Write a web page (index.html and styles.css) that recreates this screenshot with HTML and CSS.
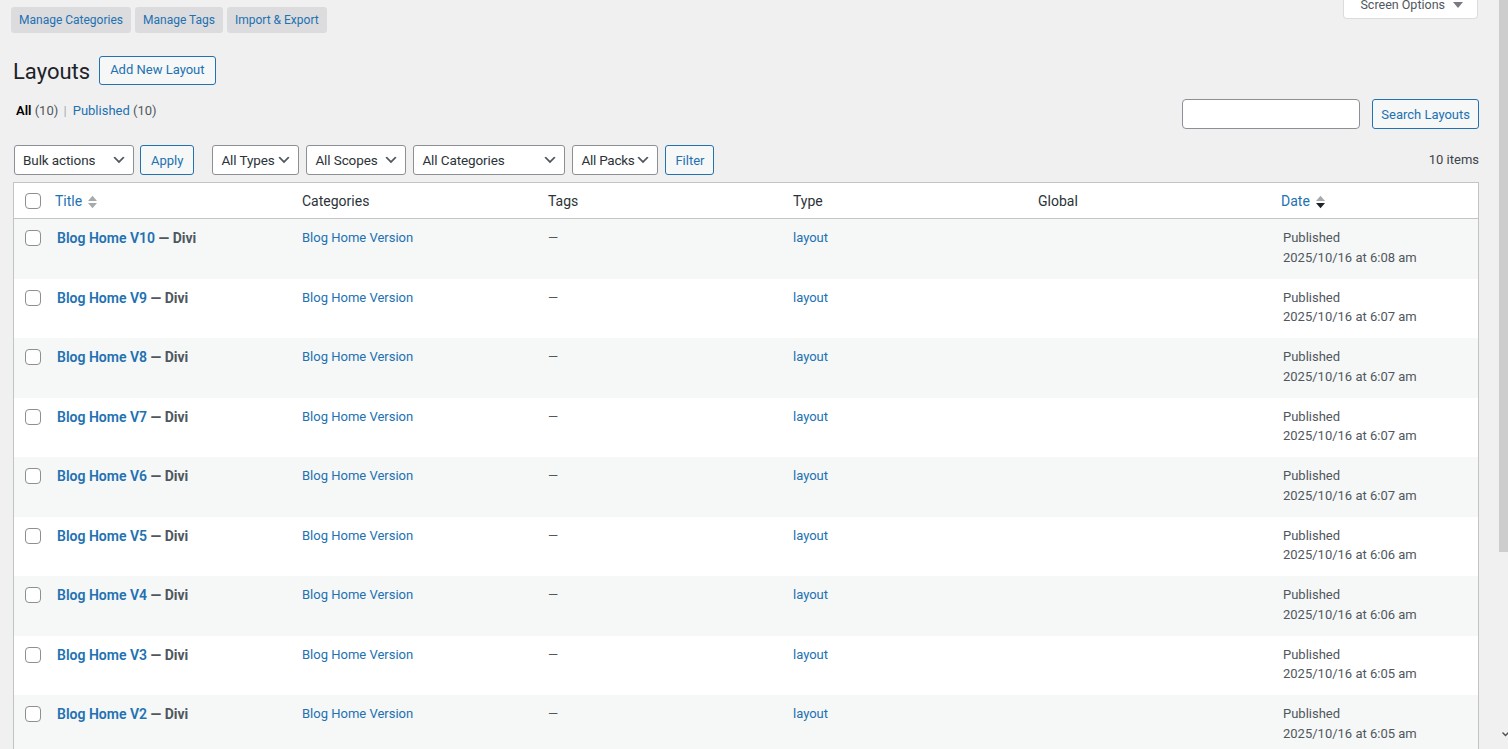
FILE: index.html
```html
<!DOCTYPE html>
<html lang="en">
<head>
    <meta charset="UTF-8">
    <meta name="viewport" content="width=device-width, initial-scale=1.0">
    <title>Layouts</title>
    <link rel="stylesheet" href="styles.css">
</head>
<body>
    <div class="screen">
        <div class="page">
            <div class="top-bar">
                <nav class="lib-tabs">
                    <a href="#" class="lib-tab">Manage Categories</a>
                    <a href="#" class="lib-tab">Manage Tags</a>
                    <a href="#" class="lib-tab">Import &amp; Export</a>
                </nav>
                <button class="screen-options">
                    <span>Screen Options</span>
                    <svg width="10" height="8" viewBox="0 0 10 8"><path d="M0 1h10L5 7z" fill="#787c82"/></svg>
                </button>
            </div>

            <div class="heading">
                <h1>Layouts</h1>
                <a href="#" class="button title-action">Add New Layout</a>
            </div>

            <div class="status-row">
                <ul class="subsubsub">
                    <li><a href="#" class="current">All <span class="count">(10)</span></a> <span class="sep">|</span></li>
                    <li><a href="#">Published <span class="count">(10)</span></a></li>
                </ul>
                <div class="search-box">
                    <input type="search" class="search-input">
                    <button class="button search-button">Search Layouts</button>
                </div>
            </div>

            <div class="tablenav">
                <div class="actions">
                    <div class="bulk">
                        <div class="select w-bulk"><span>Bulk actions</span> <svg class="chev" width="16" height="16" viewBox="0 0 20 20"><path d="M5 6l5 5 5-5 2 1-7 7-7-7z" fill="#50575e"/></svg></div>
                        <button class="button">Apply</button>
                    </div>
                    <div class="filters">
                        <div class="select w-types"><span>All Types</span> <svg class="chev" width="16" height="16" viewBox="0 0 20 20"><path d="M5 6l5 5 5-5 2 1-7 7-7-7z" fill="#50575e"/></svg></div>
                        <div class="select w-scopes"><span>All Scopes</span> <svg class="chev" width="16" height="16" viewBox="0 0 20 20"><path d="M5 6l5 5 5-5 2 1-7 7-7-7z" fill="#50575e"/></svg></div>
                        <div class="select w-cats"><span>All Categories</span> <svg class="chev" width="16" height="16" viewBox="0 0 20 20"><path d="M5 6l5 5 5-5 2 1-7 7-7-7z" fill="#50575e"/></svg></div>
                        <div class="select w-packs"><span>All Packs</span> <svg class="chev" width="16" height="16" viewBox="0 0 20 20"><path d="M5 6l5 5 5-5 2 1-7 7-7-7z" fill="#50575e"/></svg></div>
                        <button class="button filter-button">Filter</button>
                    </div>
                </div>
                <div class="displaying-num">10 items</div>
            </div>

            <table class="list-table">
                <colgroup>
                    <col class="col-check">
                    <col class="col-title">
                    <col class="col-cats">
                    <col class="col-tags">
                    <col class="col-type">
                    <col class="col-global">
                    <col class="col-date">
                </colgroup>
                <thead>
                    <tr>
                        <th class="check-column"><span class="checkbox"></span></th>
                        <th class="sortable">
                            <a href="#">Title
                                <svg width="9" height="14" viewBox="0 0 10 14"><path d="M5 0l5 6H0z" fill="#a7aaad"/><path d="M0 8h10l-5 6z" fill="#a7aaad"/></svg>
                            </a>
                        </th>
                        <th>Categories</th>
                        <th>Tags</th>
                        <th>Type</th>
                        <th>Global</th>
                        <th class="sortable">
                            <a href="#">Date
                                <svg width="9" height="14" viewBox="0 0 10 14"><path d="M5 0l5 6H0z" fill="#a7aaad"/><path d="M0 8h10l-5 6z" fill="#1d2327"/></svg>
                            </a>
                        </th>
                    </tr>
                </thead>
                <tbody id="layout-rows"></tbody>
            </table>
        </div>

        <div class="scrollbar">
            <div class="scroll-thumb"></div>
            <svg class="scroll-arrow" width="7" height="5" viewBox="0 0 7 5"><path d="M0.5 0.5l3 3 3-3" fill="none" stroke="#505050" stroke-width="1.4"/></svg>
        </div>
    </div>

    <script>
        // Layout entries, newest first
        const layouts = [
            { name: "Blog Home V10", time: "6:08 am" },
            { name: "Blog Home V9", time: "6:07 am" },
            { name: "Blog Home V8", time: "6:07 am" },
            { name: "Blog Home V7", time: "6:07 am" },
            { name: "Blog Home V6", time: "6:07 am" },
            { name: "Blog Home V5", time: "6:06 am" },
            { name: "Blog Home V4", time: "6:06 am" },
            { name: "Blog Home V3", time: "6:05 am" },
            { name: "Blog Home V2", time: "6:05 am" },
            { name: "Blog Home V1", time: "6:05 am" }
        ];

        const tbody = document.getElementById("layout-rows");

        layouts.forEach(item => {
            let tr = document.createElement("tr");
            tr.innerHTML = `
                <td class="check-column"><span class="checkbox"></span></td>
                <td class="title-cell"><strong><a href="#" class="row-title">${item.name}</a> <span class="post-state">&mdash; Divi</span></strong></td>
                <td><a href="#">Blog Home Version</a></td>
                <td class="muted">&mdash;</td>
                <td><a href="#">layout</a></td>
                <td></td>
                <td class="date">Published<br>2025/10/16 at ${item.time}</td>
            `;
            tbody.appendChild(tr);
        });
    </script>
</body>
</html>
```

FILE: styles.css
```css
* {
    box-sizing: border-box;
}
html,
body {
    margin: 0;
    height: 100%;
    overflow: hidden;
}
body {
    background: #f0f0f1;
    color: #3c434a;
    font-family: Roboto, "Liberation Sans", Arial, sans-serif;
    font-size: 13px;
    line-height: 1.4;
}
a {
    color: #2271b1;
    text-decoration: none;
}
.screen {
    display: flex;
    height: 100vh;
}
.page {
    flex: 1;
    min-width: 0;
    padding: 0 20px 0 13px;
}

/* top tabs + screen options */
.top-bar {
    display: flex;
    justify-content: space-between;
    align-items: flex-start;
}
.lib-tabs {
    display: flex;
    gap: 4px;
    padding-top: 7px;
    margin-left: -2px;
}
.lib-tab {
    background: #dcdcde;
    border-radius: 3px;
    height: 26px;
    line-height: 25px;
    padding: 1px 8px 0;
    font-size: 12px;
}
.screen-options {
    display: flex;
    align-items: center;
    gap: 8px;
    margin-top: -9px;
    margin-right: 1px;
    height: 28px;
    padding: 0 14px 0 16px;
    background: #fff;
    border: 1px solid #dcdcde;
    border-top: none;
    border-radius: 0 0 4px 4px;
    color: #50575e;
    font-family: inherit;
    font-size: 12.5px;
    white-space: nowrap;
}

/* page heading */
.heading {
    display: flex;
    align-items: flex-start;
    gap: 9px;
    margin-top: 23px;
}
h1 {
    margin: 2px 0 0;
    font-size: 22px;
    font-weight: 400;
    line-height: 28px;
    color: #1d2327;
}
.button {
    display: inline-flex;
    align-items: center;
    justify-content: center;
    height: 30px;
    padding: 0 10px;
    border: 1px solid #2271b1;
    border-radius: 3px;
    background: #f6f7f7;
    color: #2271b1;
    font-family: inherit;
    font-size: 13px;
    white-space: nowrap;
}
.title-action {
    height: 29px;
}
.search-button {
    padding: 0 8px;
}
.filter-button {
    padding: 0 9px;
}

/* status links + search */
.status-row {
    display: flex;
    justify-content: space-between;
    align-items: flex-start;
    margin-top: 13px;
}
.subsubsub {
    list-style: none;
    margin: 0;
    padding: 1px 0 0 3px;
    display: flex;
    gap: 4px;
    line-height: 22px;
    color: #646970;
}
.subsubsub .current {
    color: #000;
    font-weight: 600;
}
.count {
    color: #50575e;
    font-weight: 400;
}
.sep {
    color: #a7aaad;
    margin: 0 2px;
}
.search-box {
    display: flex;
    gap: 12px;
}
.search-input {
    width: 178px;
    height: 30px;
    border: 1px solid #8c8f94;
    border-radius: 4px;
    background: #fff;
}

/* filters */
.tablenav {
    display: flex;
    justify-content: space-between;
    align-items: center;
    margin-top: 16px;
    height: 30px;
}
.actions {
    display: flex;
    gap: 18px;
}
.bulk {
    display: flex;
    gap: 6px;
    margin-left: 1px;
}
.filters {
    display: flex;
    gap: 7px;
}
.select {
    display: flex;
    align-items: center;
    justify-content: space-between;
    height: 30px;
    padding: 0 6px 0 8px;
    border: 1px solid #8c8f94;
    border-radius: 3px;
    background: #fff;
    color: #2c3338;
    font-size: 13.5px;
    letter-spacing: -0.1px;
    white-space: nowrap;
}
.select span {
    overflow: hidden;
}
.chev {
    flex-shrink: 0;
}
.w-bulk { width: 120px; }
.w-types { width: 87px; }
.w-scopes { width: 100px; }
.w-cats { width: 152px; }
.w-packs { width: 86px; letter-spacing: -0.25px; }
.displaying-num {
    color: #3c434a;
}

/* list table */
.list-table {
    width: 100%;
    margin-top: 7px;
    border-spacing: 0;
    table-layout: fixed;
    background: #fff;
    border: 1px solid #c3c4c7;
    box-shadow: 0 1px 1px rgba(0, 0, 0, 0.04);
}
.col-check { width: 31px; }
.col-title { width: 247px; }
.col-cats { width: 246px; }
.col-tags { width: 245px; }
.col-type { width: 245px; }
.col-global { width: 243px; }
.col-date { width: 207px; }
th {
    text-align: left;
    font-weight: 400;
    font-size: 14px;
    color: #2c3338;
    padding: 9px 10px 7px;
    line-height: 19px;
    border-bottom: 1px solid #c3c4c7;
}
.sortable a {
    display: inline-flex;
    align-items: center;
    gap: 6px;
}
.checkbox {
    display: block;
    width: 16px;
    height: 16px;
    border: 1px solid #8c8f94;
    border-radius: 4px;
    background: #fff;
}
th.check-column {
    vertical-align: top;
    padding: 10px 0 0 11px;
}
tbody tr {
    height: 59.5px;
}
tbody tr:nth-child(odd) {
    background: #f6f7f7;
}
td {
    vertical-align: top;
    padding: 9px 10px 7px;
    line-height: 19.5px;
}
td.check-column {
    padding: 11px 0 0 11px;
}
.title-cell {
    padding-left: 12px;
    font-size: 14px;
    line-height: 21px;
}
.row-title {
    font-weight: 600;
}
.post-state {
    color: #50575e;
}
.muted {
    color: #50575e;
}
.date {
    color: #50575e;
    padding-left: 12px;
}

/* fake browser scrollbar */
.scrollbar {
    width: 9px;
    display: flex;
    flex-direction: column;
    align-items: center;
    background: #f0f0f0;
}
.scroll-thumb {
    width: 9px;
    height: 552px;
    background: #cdcdcd;
}
.scroll-arrow {
    margin-top: auto;
    margin-bottom: 12px;
    margin-left: 4px;
}
```
